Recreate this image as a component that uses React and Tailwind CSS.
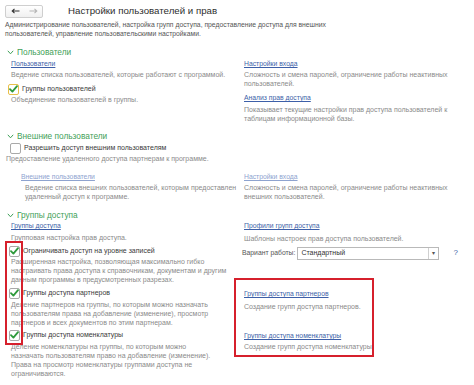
import React from "react";

const Check = ({ focus }) => (
  <span
    className={`inline-flex w-[11px] h-[11px] shrink-0 items-center justify-center rounded-[2px] border bg-white ${
      focus ? "border-[#e8c04a]" : "border-[#a9a9a9]"
    }`}
  >
    <svg width="9" height="8" viewBox="0 0 9 8">
      <path d="M1 4.2 L3.4 6.6 L8 1.2" fill="none" stroke="#2f9a3c" strokeWidth="1.8" strokeLinecap="round" strokeLinejoin="round" />
    </svg>
  </span>
);

const Empty = () => (
  <span className="inline-block w-[11px] h-[11px] shrink-0 rounded-[2px] border border-[#a9a9a9] bg-white" />
);

const Link = ({ children, className = "", faded }) => (
  <div
    className={`text-[6.8px] leading-[10px] underline whitespace-nowrap ${
      faded ? "text-[#8ea3cf] decoration-[#8ea3cf]" : "text-[#3d5fa8] decoration-[#3d5fa8]"
    } ${className}`}
  >
    {children}
  </div>
);

const Desc = ({ children, className = "" }) => (
  <div className={`text-[7px] leading-[9px] text-[#8a8a8a] whitespace-nowrap ${className}`}>{children}</div>
);

const Header = ({ children, className = "" }) => (
  <div className={`flex items-center h-[12px] pl-[7px] ${className}`}>
    <svg width="7" height="5" viewBox="0 0 7 5" className="mr-[3px]">
      <path d="M0.8 0.8 L3.5 3.8 L6.2 0.8" fill="none" stroke="#3f9f58" strokeWidth="1" />
    </svg>
    <span className="text-[8.3px] leading-[12px] text-[#3f9f58] whitespace-nowrap">{children}</span>
  </div>
);

const CheckRow = ({ children, checked = true, focus, className = "" }) => (
  <div className={`flex items-center h-[12px] gap-[3px] ${className}`}>
    {checked ? <Check focus={focus} /> : <Empty />}
    <span className="text-[7px] leading-[10px] text-[#3a3a3a] whitespace-nowrap">{children}</span>
  </div>
);

export default function App() {
  return (
    <div className="relative w-[474px] h-[385px] overflow-hidden bg-white font-['Liberation_Sans',Arial,sans-serif]">
      {/* top bar */}
      <div className="flex items-center pt-[4px] pl-[5px]">
        <div className="flex h-[13px] w-[38px] items-center rounded-[2px] border border-[#cfcfcf] bg-gradient-to-b from-white to-[#f0f0f0]">
          <div className="flex flex-1 items-center justify-center">
            <svg width="9" height="6" viewBox="0 0 9 6">
              <path d="M8.5 3 H1.5 M3.5 0.8 L1.2 3 L3.5 5.2" fill="none" stroke="#333" strokeWidth="1.1" />
            </svg>
          </div>
          <div className="flex flex-1 items-center justify-center">
            <svg width="9" height="6" viewBox="0 0 9 6">
              <path d="M0.5 3 H7.5 M5.5 0.8 L7.8 3 L5.5 5.2" fill="none" stroke="#b5b5b5" strokeWidth="1.1" />
            </svg>
          </div>
        </div>
        <div className="ml-[25px] text-[9.7px] leading-[14px] text-[#2d2d2d] whitespace-nowrap">
          Настройки пользователей и прав
        </div>
      </div>

      <div className="mt-[3px] pl-[5px] text-[6.8px] leading-[8.5px] text-[#555] whitespace-nowrap">
        <div>Администрирование пользователей, настройка групп доступа, предоставление доступа для внешних</div>
        <div>пользователей, управление пользовательскими настройками.</div>
      </div>

      {/* Section 1 */}
      <Header className="mt-[8px]">Пользователи</Header>
      <div className="flex">
        <div className="w-[234px] shrink-0">
          <Link className="ml-[11px] mt-[1px]">Пользователи</Link>
          <Desc className="ml-[11px] mt-[1px] leading-[10px]">Ведение списка пользователей, которые работают с программой.</Desc>
          <CheckRow focus className="ml-[8px] mt-[3px]">Группы пользователей</CheckRow>
          <Desc className="ml-[11px] leading-[10px]">Объединение пользователей в группы.</Desc>
        </div>
        <div className="pl-[10px]">
          <Link className="mt-[1px]">Настройки входа</Link>
          <Desc className="mt-[1px]">
            <div>Сложность и смена паролей, ограничение работы неактивных</div>
            <div>пользователей.</div>
          </Desc>
          <Link className="mt-[5px]">Анализ прав доступа</Link>
          <Desc className="mt-[2px]">
            <div>Показывает текущие настройки прав доступа пользователей к</div>
            <div>таблицам информационной базы.</div>
          </Desc>
        </div>
      </div>

      {/* Section 2 */}
      <Header className="mt-[7px]">Внешние пользователи</Header>
      <CheckRow checked={false} className="ml-[10px]">Разрешить доступ внешним пользователям</CheckRow>
      <Desc className="ml-[6px] leading-[10px]">Предоставление удаленного доступа партнерам к программе.</Desc>
      <div className="flex">
        <div className="w-[234px] shrink-0">
          <Link faded className="ml-[21px] mt-[8px]">Внешние пользователи</Link>
          <Desc className="ml-[25px] mt-[1px]">
            <div>Ведение списка внешних пользователей, которым предоставлен</div>
            <div>удаленный доступ к программе.</div>
          </Desc>
        </div>
        <div className="pl-[10px]">
          <Link faded className="mt-[8px]">Настройки входа</Link>
          <Desc className="mt-[1px]">
            <div>Сложность и смена паролей, ограничение работы неактивных</div>
            <div>внешних пользователей.</div>
          </Desc>
        </div>
      </div>

      {/* Section 3 */}
      <Header className="mt-[8px]">Группы доступа</Header>
      <div className="flex">
        <div className="w-[234px] shrink-0">
          <Link className="ml-[11px]">Группы доступа</Link>
          <Desc className="ml-[11px] mt-[2px] leading-[10px]">Групповая настройка прав доступа.</Desc>
          <CheckRow className="ml-[9px] mt-[2px]">Ограничивать доступ на уровне записей</CheckRow>
          <Desc className="ml-[11px]">
            <div>Расширенная настройка, позволяющая максимально гибко</div>
            <div>настраивать права доступа к справочникам, документам и другим</div>
            <div>данным программы в предусмотренных разрезах.</div>
          </Desc>
          <CheckRow className="ml-[9px] mt-[3px]">Группы доступа партнеров</CheckRow>
          <Desc className="ml-[11px] mt-[1px]">
            <div>Деление партнеров на группы, по которым можно назначать</div>
            <div>пользователям права на добавление (изменение), просмотр</div>
            <div>партнеров и всех документов по этим партнерам.</div>
          </Desc>
          <CheckRow className="ml-[9px] mt-[2px]">Группы доступа номенклатуры</CheckRow>
          <Desc className="ml-[11px] mt-[1px]">
            <div>Деление номенклатуры на группы, по которым можно</div>
            <div>назначать пользователям право на добавление (изменение).</div>
            <div>Права на просмотр номенклатуры группами доступа не</div>
            <div>ограничиваются.</div>
          </Desc>
        </div>
        <div>
          <Link className="ml-[10px]">Профили групп доступа</Link>
          <Desc className="ml-[10px] mt-[3px] leading-[10px]">Шаблоны настроек прав доступа пользователей.</Desc>
          <div className="ml-[8px] mt-[2px] flex h-[14px] items-center">
            <span className="shrink-0 text-[6.8px] leading-[10px] text-[#555] whitespace-nowrap">Вариант работы:</span>
            <div className="ml-[2px] flex h-[13px] w-[142px] shrink-0 items-center border border-[#b9b9b9] bg-white">
              <span className="flex-1 pl-[3px] text-[7px] leading-[10px] text-[#333]">Стандартный</span>
              <span className="flex h-full w-[10px] items-center justify-center border-l border-[#d0d0d0] text-[6px] text-[#555]">▾</span>
            </div>
            <span className="ml-[14px] text-[8px] leading-[10px] text-[#3d5fa8]">?</span>
          </div>
          <div className="mt-[18px] w-[140px] border-2 border-[#d6202c] pb-[3px] pl-[8px] pt-[9px]">
            <Link>Группы доступа партнеров</Link>
            <Desc className="mt-[3px] leading-[10px]">Создание групп доступа партнеров.</Desc>
            <Link className="mt-[19px]">Группы доступа номенклатуры</Link>
            <Desc className="mt-[1px] leading-[10px]">Создание групп доступа номенклатуры</Desc>
          </div>
        </div>
      </div>

      {/* highlight around checkboxes */}
      <div className="absolute left-[5px] top-[241px] h-[104px] w-[18px] border-2 border-[#d6202c]" />
    </div>
  );
}
